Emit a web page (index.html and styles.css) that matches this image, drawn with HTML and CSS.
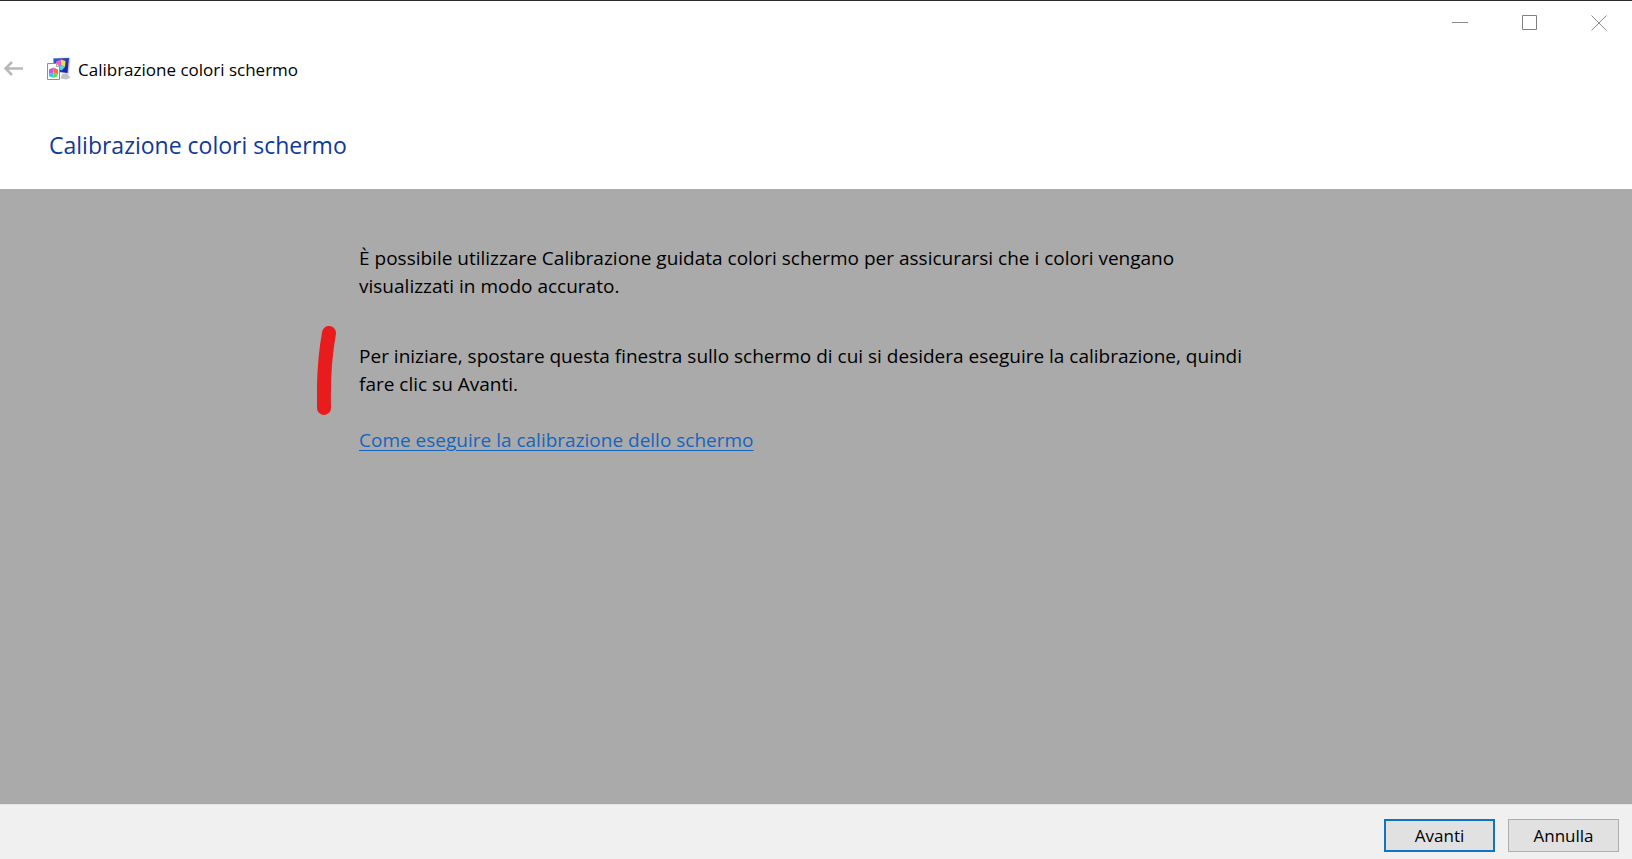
FILE: index.html
```html
<!DOCTYPE html>
<html lang="it">
<head>
    <meta charset="UTF-8">
    <meta name="viewport" content="width=device-width, initial-scale=1.0">
    <title>Calibrazione colori schermo</title>
    <link rel="stylesheet" href="styles.css">
</head>
<body>
    <!-- Window buttons -->
    <div class="titlebar">
        <button type="button" class="window-button" aria-label="Riduci a icona">
            <svg width="16" height="16" viewBox="0 0 16 16"><path d="M0 7.5h16" stroke="#8c8c8c" fill="none"/></svg>
        </button>
        <button type="button" class="window-button" aria-label="Ingrandisci">
            <svg width="16" height="16" viewBox="0 0 16 16"><path d="M0.5 0.5h14v14h-14z" stroke="#808080" fill="none"/></svg>
        </button>
        <button type="button" class="window-button" aria-label="Chiudi">
            <svg width="16" height="16" viewBox="0 0 16 16"><path d="M0.5 0.5l15 15M15.5 0.5l-15 15" stroke="#8c8c8c" fill="none"/></svg>
        </button>
    </div>

    <header class="header">
        <div class="nav">
            <button type="button" class="back-button" aria-label="Indietro" disabled>
                <svg width="20" height="16" viewBox="0 0 20 16"><path d="M8 1L1.500 7.500l6.500 6.500M2 7.500h17" stroke="#b8b8b8" stroke-width="2.500" fill="none"/></svg>
            </button>
            <svg class="app-icon" width="24" height="24" viewBox="0 0 24 24">
                <defs>
                    <linearGradient id="screen" x1="0" y1="0" x2="1" y2="1">
                        <stop offset="0" stop-color="#2f63c8"/>
                        <stop offset="1" stop-color="#1717a8"/>
                    </linearGradient>
                </defs>
                <!-- monitor -->
                <path d="M6 1l17.500-.5L22 17 6 15z" fill="#cfd0dc"/>
                <path d="M15 17l5-.5 3.500 4-4 2-6-1z" fill="#c2c2c6"/>
                <path d="M6.500 1.500L22 1l-1.500 15L7 14z" fill="url(#screen)"/>
                <path d="M9 4.500l5-2v5.500l-5 2z" fill="#ed5cd0"/>
                <path d="M14 2.500l4.500 1.500-.5 6L14 8z" fill="#f2dc4a"/>
                <path d="M9 10l5-2 4 2-3.500 3.500z" fill="#48dce0"/>
                <!-- page in front -->
                <path d="M.5 6.500h9l3 3v13H.5z" fill="#fff" stroke="#8e8e8e"/>
                <path d="M9.500 6.500v3h3" fill="#e8e8e8" stroke="#a8a8a8"/>
                <path d="M2 12.500l4.500-2v5l-4.500 1.500z" fill="#b45cf0"/>
                <path d="M6.500 10.500l4.500 2v4.500l-4.500-1.500z" fill="#ff6a3c"/>
                <path d="M2 17l4.500-1.500V21L2 19z" fill="#30c4ee"/>
                <path d="M6.500 15.500L11 17l-1 2.500L6.500 21z" fill="#62dc4c"/>
            </svg>
            <span class="app-name">Calibrazione colori schermo</span>
        </div>
        <h1>Calibrazione colori schermo</h1>
    </header>

    <main class="content">
        <div class="text">
            <p class="intro">È possibile utilizzare Calibrazione guidata colori schermo per assicurarsi che i colori vengano visualizzati in modo accurato.</p>
            <div class="start">
                <!-- red pen stroke beside the paragraph -->
                <svg class="mark" width="20" height="90" viewBox="0 0 20 90"><path d="M12 7Q6 40 7 82" stroke="#e81c1c" stroke-width="14" stroke-linecap="round" fill="none"/></svg>
                <p>Per iniziare, spostare questa finestra sullo schermo di cui si desidera eseguire la calibrazione, quindi fare clic su Avanti.</p>
            </div>
            <a href="#">Come eseguire la calibrazione dello schermo</a>
        </div>
    </main>

    <footer class="footer">
        <button type="button" class="button primary">Avanti</button>
        <button type="button" class="button">Annulla</button>
    </footer>
</body>
</html>
```
FILE: styles.css
```css
* {
    box-sizing: border-box;
}

body {
    font-family: "Open Sans", "Noto Sans", sans-serif;
    background-color: white;
    color: black;
    margin: 0;
    min-height: 100vh;
    border-top: 1px solid #2b2b2b;
    display: flex;
    flex-direction: column;
}

h1, p {
    margin: 0;
}

button {
    font-family: inherit;
    margin: 0;
    padding: 0;
}

svg {
    display: block;
}

/* Title bar */
.titlebar {
    display: flex;
    justify-content: flex-end;
    height: 44px;
}

.window-button {
    display: flex;
    align-items: center;
    justify-content: center;
    width: 70px;
    border: none;
    background: none;
}

.window-button:last-child {
    width: 67px;
}

/* Header */
.header {
    padding-bottom: 24px;
}

.nav {
    display: flex;
    align-items: center;
    height: 48px;
}

.back-button {
    width: 47px;
    padding-left: 4px;
    border: none;
    background: none;
}

.app-name {
    margin-left: 7px;
    font-size: 17px;
}

h1 {
    margin-top: 32px;
    padding-left: 49px;
    color: #10399a;
    font-size: 23px;
    font-weight: normal;
    line-height: 40px;
}

/* Page text */
.content {
    flex: 1;
    padding: 55px 22%;
    background-color: #aaa;
    font-size: 19px;
    line-height: 28px;
}

.text {
    max-width: 900px;
}

.start {
    position: relative;
    margin: 42px 0 28px;
}

.mark {
    position: absolute;
    top: -16px;
    left: -42px;
}

.content a {
    color: #1565c0;
    text-decoration-thickness: 1px;
    text-underline-offset: 3px;
}

/* Bottom buttons */
.footer {
    display: flex;
    justify-content: flex-end;
    gap: 13px;
    padding: 14px 13px 7px;
    border-top: 1px solid #e4e4e4;
    background-color: #f0f0f0;
}

.button {
    width: 111px;
    height: 33px;
    border: 1px solid #adadad;
    background-color: #e1e1e1;
    color: black;
    font-size: 17px;
}

.button.primary {
    border: 2px solid #0f74c4;
}
```
